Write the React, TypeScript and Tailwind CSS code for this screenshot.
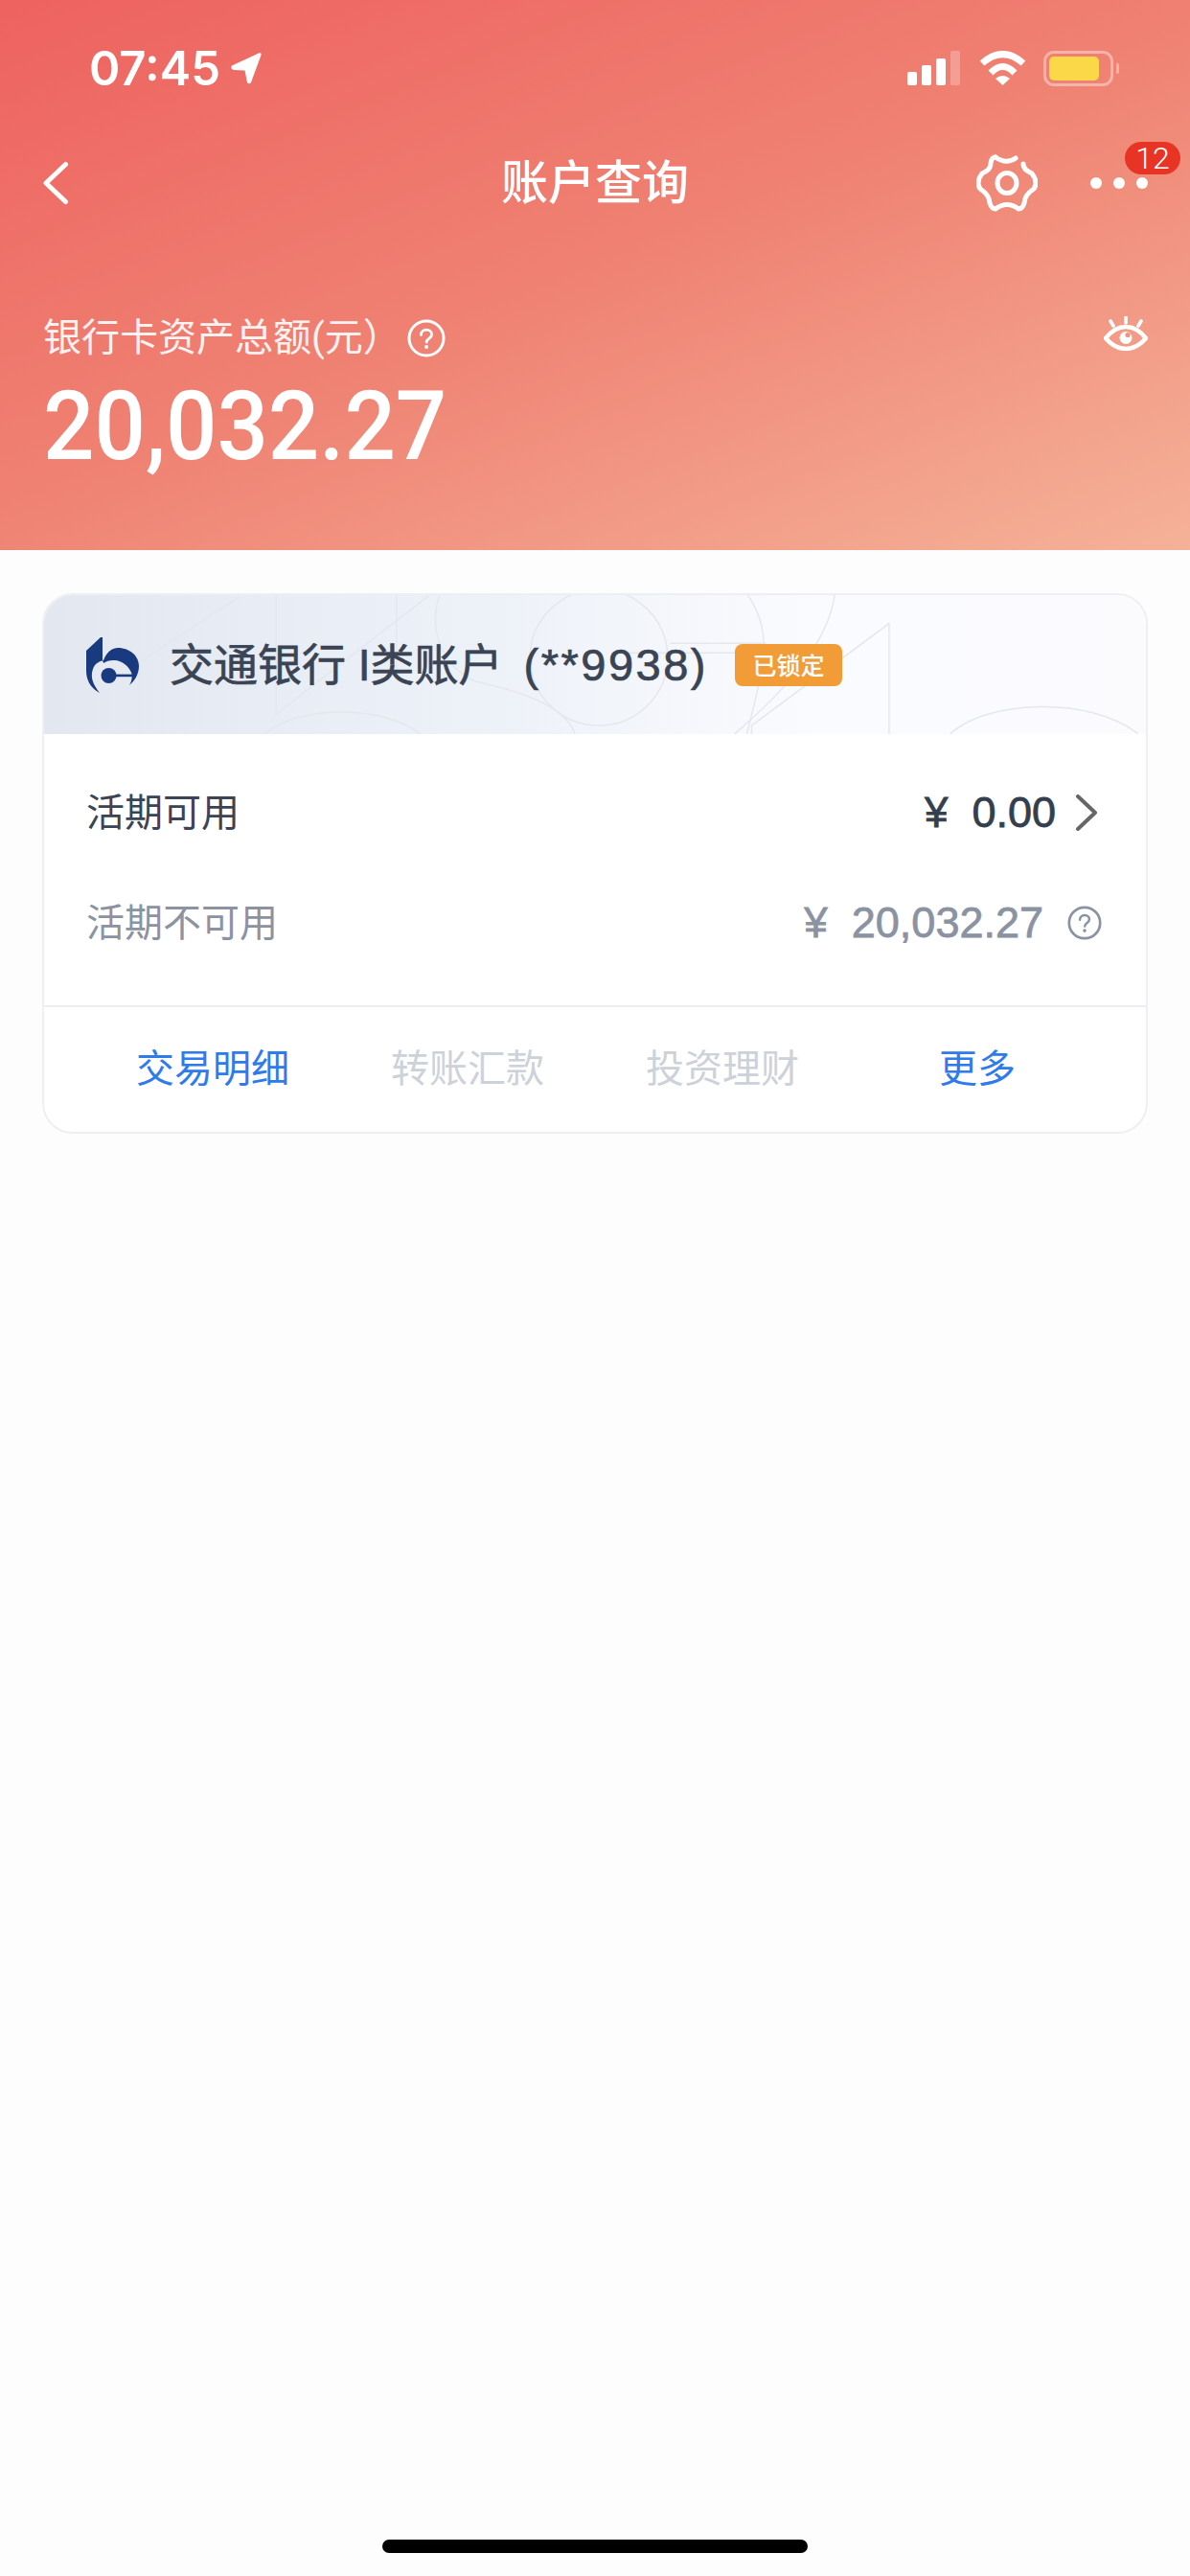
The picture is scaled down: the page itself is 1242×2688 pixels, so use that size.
import React from "react";

function Help({ className, size }: { className: string; size: number }) {
  return (
    <svg width={size} height={size} viewBox="0 0 40 40" fill="none" className={className}>
      <circle cx="20" cy="20" r="18" stroke="currentColor" strokeWidth="3" />
      <path d="M14.5 16.5c0-3.2 2.400-5.300 5.600-5.300 3.100 0 5.400 2 5.400 4.700 0 2.200-1.300 3.300-2.900 4.400-1.400 1-2.400 1.800-2.400 3.700" stroke="currentColor" strokeWidth="2.800" strokeLinecap="round" />
      <circle cx="20" cy="29" r="2" fill="currentColor" />
    </svg>
  );
}

function Gear() {
  return (
    <svg width="64" height="60" viewBox="0 0 64 60" fill="none" stroke="white" strokeWidth="5" strokeLinecap="round" strokeLinejoin="round">
      <path d="M20 3Q31 11 41 4" />
      <path d="M49 10C49 16 54 18 58 20Q62 25 62 30Q62 33 60 36C54 40 50 44 50 51Q48 57 44 57Q32 48 20 57Q16 57 14 51C14 44 10 40 4 36Q2 33 2 30Q2 25 6 20C10 18 15 16 15 9Q16 3 20 3" />
      <ellipse cx="32" cy="30" rx="10" ry="10.500" />
    </svg>
  );
}

function Eye() {
  return (
    <svg width="46" height="36" viewBox="0 0 46 36" fill="none">
      <path d="M2 23C9 14 15 11 23 11C31 11 37 14 44 23C37 31 31 34 23 34C15 34 9 31 2 23Z" stroke="white" strokeWidth="4.500" strokeLinejoin="round" />
      <path d="M23 1V7M7 5L10 10M39 5L36 10" stroke="white" strokeWidth="3.600" strokeLinecap="round" />
      <circle cx="23" cy="22.500" r="6.500" fill="white" />
      <circle cx="25" cy="19.500" r="2.600" fill="#ef9480" />
    </svg>
  );
}

function BankLogo() {
  return (
    <svg width="55" height="58" viewBox="0 0 55 58" fill="#1a3a80">
      <path d="M15 0L0 14V35C0 46 6 54 14 58C7 49 4 42 7 33C9 27 14 25 18 24C22 14 28 11 33 11C46 11 55 20 55 30C55 39 50 46 45 50C47.500 46 48 42 47.500 38C45 30 36 23 28 24C24 24 21 25 18 27L17 24V0Z" />
      <circle cx="23.500" cy="40" r="8" />
      <rect x="26" y="38.600" width="22" height="2.600" />
    </svg>
  );
}

function Pattern() {
  return (
    <svg className="absolute inset-0 h-full w-full" viewBox="44 619 1154 147" preserveAspectRatio="none" fill="none" stroke="#e4e7ed" strokeWidth="1.500">
      <path d="M248 621L144 690V766" />
      <path d="M287 620V745L510 570" />
      <path d="M413 619V700" />
      <circle cx="625" cy="685" r="72" />
      <path d="M458 619C448 650 455 690 495 710C540 720 590 735 600 766" />
      <path d="M275 766C310 735 400 735 438 766" />
      <path d="M781 619C795 640 800 660 797 690C792 720 785 745 780 766" />
      <path d="M872 619C865 670 820 720 767 766" />
      <path d="M700 670H800" />
      <path d="M640 680H780" />
      <path d="M785 766V757L929 649V766" />
      <path d="M993 766C1030 730 1140 725 1190 766" />
    </svg>
  );
}

function Row({ label, muted, children }: { label: string; muted?: boolean; children: React.ReactNode }) {
  return (
    <div className="flex h-[115px] items-center justify-between pl-[44px]">
      <span className={muted ? "text-[40px] text-[#8b93a3]" : "text-[40px] text-[#3a4454]"}>{label}</span>
      {children}
    </div>
  );
}

export default function App() {
  return (
    <div className="flex h-[2688px] w-[1242px] flex-col overflow-hidden bg-[#fdfdfd] font-['Roboto','Noto_Sans_CJK_SC',sans-serif]">
      <header className="relative h-[574px] shrink-0 bg-[linear-gradient(158deg,#ee625f_0%,#ef8273_50%,#f5b298_100%)] text-white">
        <div className="flex h-[142px] items-center justify-between pl-[93px] pr-[74px]">
          <div className="flex items-center gap-[11px]">
            <span className="font-['Inter',sans-serif] text-[49px] font-semibold leading-none">07:45</span>
            <svg width="32" height="33" viewBox="0 0 32 33" fill="white"><path d="M1 13.500L29 .5Q32 -.5 31.500 2.500L21 31Q19 33.500 17 31L14.500 18.500L2.500 18Q-1 16 1 13.500Z" /></svg>
          </div>
          <div className="flex items-center">
            <div className="flex h-[36px] items-end gap-[5px]">
              <div className="h-[14px] w-[10px] rounded-[2px] bg-white" />
              <div className="h-[21px] w-[10px] rounded-[2px] bg-white" />
              <div className="h-[28px] w-[10px] rounded-[2px] bg-white" />
              <div className="h-[36px] w-[10px] rounded-[2px] bg-white/25" />
            </div>
            <svg className="ml-[20px]" width="49" height="36" viewBox="0 0 49 36" fill="none">
              <path d="M3 13Q24.500 -6 46 13M12 23Q24.500 10 37 23" stroke="white" strokeWidth="7" />
              <path d="M17 29Q24.500 23 32 29L24.500 36Z" fill="white" />
            </svg>
            <div className="ml-[18px] flex items-center gap-[3px]">
              <div className="h-[37px] w-[73px] rounded-[11px] border-[3px] border-white/40 p-[3px]">
                <div className="h-full w-[52px] rounded-[5px] bg-[#fbd848]" />
              </div>
              <div className="h-[11px] w-[3px] rounded-r-[2px] bg-white/40" />
            </div>
          </div>
        </div>
        <div className="flex h-[98px] items-center">
          <div className="flex w-[300px] items-center pl-[44px]">
            <svg width="28" height="46" viewBox="0 0 28 46" fill="none"><path d="M24.500 3.500L4 23L24.500 42.500" stroke="white" strokeWidth="5" strokeLinecap="round" strokeLinejoin="round" /></svg>
          </div>
          <h1 className="flex-1 text-center text-[49px] font-medium leading-none">账户查询</h1>
          <div className="flex w-[300px] items-center justify-end gap-[55px] pr-[44px]">
            <Gear />
            <div className="relative flex items-center gap-[12px]">
              <div className="h-[12px] w-[12px] rounded-full bg-white" />
              <div className="h-[12px] w-[12px] rounded-full bg-white" />
              <div className="h-[12px] w-[12px] rounded-full bg-white" />
              <div className="absolute left-[36px] top-[-37px] flex h-[34px] w-[58px] items-center justify-center rounded-[17px] bg-[#e83424] text-[32px] font-light leading-none">12</div>
            </div>
          </div>
        </div>
        <div className="mt-[85px] flex h-[56px] items-center justify-between pl-[45px] pr-[44px]">
          <div className="flex items-center gap-[6px]">
            <span className="text-[40px] leading-none text-white/90">银行卡资产总额(元）</span>
            <Help className="text-white" size={40} />
          </div>
          <div className="mb-[10px]"><Eye /></div>
        </div>
        <div className="mt-[14px] origin-left scale-x-[0.94] pl-[48px] text-[100px] font-medium leading-[100px]">20,032.27</div>
      </header>

      <section className="mx-[44px] mt-[45px] h-[564px] overflow-hidden rounded-[32px] border-2 border-[#eeeff2] bg-white">
        <div className="relative flex h-[145px] items-center bg-[linear-gradient(90deg,#e3e7f0_0%,#edf1f8_40%,#fafbfe_70%,#fbfbfe_100%)] pl-[44px]">
          <Pattern />
          <div className="relative flex items-center font-['Liberation_Sans','Noto_Sans_CJK_SC',sans-serif] text-[#3a4454]">
            <BankLogo />
            <span className="ml-[32px] text-[46px] leading-none [-webkit-text-stroke:0.7px_#3a4454]">交通银行 I类账户</span>
            <span className="ml-[22px] text-[47px] leading-none tracking-[2.5px] [-webkit-text-stroke:0.7px_#3a4454]">(**9938)</span>
            <span className="ml-[28px] flex h-[44px] w-[112px] items-center justify-center rounded-[8px] bg-[#f29c38] font-['Noto_Sans_CJK_SC',sans-serif] text-[25px] font-medium leading-none text-white">已锁定</span>
          </div>
        </div>
        <div className="flex h-[283px] flex-col pt-[24px] font-['Liberation_Sans','Noto_Sans_CJK_SC',sans-serif]">
          <Row label="活期可用">
            <div className="flex items-center pr-[50px]">
              <span className="text-[44px] leading-none text-[#333f4f] [-webkit-text-stroke:0.8px_#333f4f]">¥</span>
              <span className="ml-[25px] text-[45px] leading-none text-[#333f4f] [-webkit-text-stroke:0.8px_#333f4f]">0.00</span>
              <svg className="ml-[20px]" width="24" height="38" viewBox="0 0 24 38" fill="none"><path d="M3 2L21 19L3 36" stroke="#666666" strokeWidth="4" strokeLinecap="round" strokeLinejoin="round" /></svg>
            </div>
          </Row>
          <Row label="活期不可用" muted>
            <div className="flex items-center pr-[46px]">
              <span className="text-[44px] leading-none text-[#8b93a3] [-webkit-text-stroke:0.8px_#8b93a3]">¥</span>
              <span className="ml-[25px] text-[45px] leading-none text-[#8b93a3] [-webkit-text-stroke:0.8px_#8b93a3]">20,032.27</span>
              <Help className="ml-[25px] text-[#8b93a3]" size={36} />
            </div>
          </Row>
        </div>
        <div className="grid h-[132px] grid-cols-4 items-center border-t-2 border-[#eceef2] px-[43px] text-center text-[40px]">
          <span className="text-[#2f7bea]">交易明细</span>
          <span className="text-[#cdd1d9]">转账汇款</span>
          <span className="text-[#cdd1d9]">投资理财</span>
          <span className="text-[#2f7bea]">更多</span>
        </div>
      </section>

      <div className="mt-auto flex justify-center pb-[24px]">
        <div className="h-[14px] w-[444px] rounded-full bg-black" />
      </div>
    </div>
  );
}
